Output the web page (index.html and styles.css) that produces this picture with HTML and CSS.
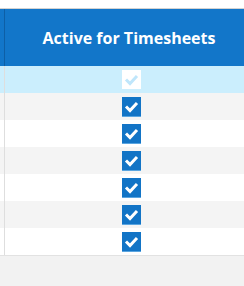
FILE: index.html
```html
<!DOCTYPE html>
<html>
<head>
<meta charset="utf-8">
<link rel="stylesheet" href="styles.css">
</head>
<body>
<div class="topbar"></div>
<div class="grid">
  <div class="row head">
    <div class="stub"></div>
    <div class="cell"><span class="title">Active for Timesheets</span></div>
  </div>
  <div class="row sel">
    <div class="stub"></div>
    <div class="cell"><span class="cb ghost"><svg width="19" height="20" viewBox="0 0 19 20"><rect x="0" y="0" width="19" height="19" fill="#ffffff"/><path d="M4 9.5 L8 13.5 L15 6" fill="none" stroke="#bfe6fb" stroke-width="3"/></svg></span></div>
  </div>
  <div class="row alt">
    <div class="stub"></div>
    <div class="cell"><span class="cb"><svg width="19" height="20" viewBox="0 0 19 20"><rect x="0" y="0" width="19" height="19" fill="#1274c6"/><rect x="0" y="19" width="19" height="1" fill="#5aa5e0"/><path d="M4 9.5 L8 13.5 L15 6" fill="none" stroke="#ffffff" stroke-width="3"/></svg></span></div>
  </div>
  <div class="row">
    <div class="stub"></div>
    <div class="cell"><span class="cb"><svg width="19" height="20" viewBox="0 0 19 20"><rect x="0" y="0" width="19" height="19" fill="#1274c6"/><rect x="0" y="19" width="19" height="1" fill="#5aa5e0"/><path d="M4 9.5 L8 13.5 L15 6" fill="none" stroke="#ffffff" stroke-width="3"/></svg></span></div>
  </div>
  <div class="row alt">
    <div class="stub"></div>
    <div class="cell"><span class="cb"><svg width="19" height="20" viewBox="0 0 19 20"><rect x="0" y="0" width="19" height="19" fill="#1274c6"/><rect x="0" y="19" width="19" height="1" fill="#5aa5e0"/><path d="M4 9.5 L8 13.5 L15 6" fill="none" stroke="#ffffff" stroke-width="3"/></svg></span></div>
  </div>
  <div class="row">
    <div class="stub"></div>
    <div class="cell"><span class="cb"><svg width="19" height="20" viewBox="0 0 19 20"><rect x="0" y="0" width="19" height="19" fill="#1274c6"/><rect x="0" y="19" width="19" height="1" fill="#5aa5e0"/><path d="M4 9.5 L8 13.5 L15 6" fill="none" stroke="#ffffff" stroke-width="3"/></svg></span></div>
  </div>
  <div class="row alt">
    <div class="stub"></div>
    <div class="cell"><span class="cb"><svg width="19" height="20" viewBox="0 0 19 20"><rect x="0" y="0" width="19" height="19" fill="#1274c6"/><rect x="0" y="19" width="19" height="1" fill="#5aa5e0"/><path d="M4 9.5 L8 13.5 L15 6" fill="none" stroke="#ffffff" stroke-width="3"/></svg></span></div>
  </div>
  <div class="row">
    <div class="stub"></div>
    <div class="cell"><span class="cb"><svg width="19" height="20" viewBox="0 0 19 20"><rect x="0" y="0" width="19" height="19" fill="#1274c6"/><rect x="0" y="19" width="19" height="1" fill="#5aa5e0"/><path d="M4 9.5 L8 13.5 L15 6" fill="none" stroke="#ffffff" stroke-width="3"/></svg></span></div>
  </div>
</div>
<div class="footer"></div>
</body>
</html>
```
FILE: styles.css
```css
html, body {
  margin: 0;
  padding: 0;
  width: 244px;
  height: 286px;
  overflow: hidden;
  background: #f2f2f2;
  font-family: "Open Sans", "Noto Sans", sans-serif;
}
.topbar {
  height: 8px;
  background: #ffffff;
  border-bottom: 1px solid #d2d2d2;
}
.grid {
  border-bottom: 1px solid #e2e2e2;
}
.row {
  display: flex;
  height: 27px;
  background: #ffffff;
}
.row.alt { background: #f4f4f4; }
.row.sel { background: #cbeefd; }
.row.head {
  height: 57px;
  background: #1276c9;
}
.stub {
  width: 4px;
  flex: none;
  border-right: 1px solid #dedede;
}
.head .stub { border-right-color: #0d5fa6; }
.cell {
  flex: 1;
  min-width: 0;
  display: flex;
  align-items: center;
  justify-content: center;
  padding-left: 14px;
}
.title {
  color: #ffffff;
  font-weight: 700;
  font-size: 16px;
  white-space: nowrap;
  padding-right: 5px;
}
.cb {
  display: block;
  width: 19px;
  height: 20px;
  margin-top: 1px;
}
.cb svg { display: block; }
.footer {
  height: 30px;
}
```
